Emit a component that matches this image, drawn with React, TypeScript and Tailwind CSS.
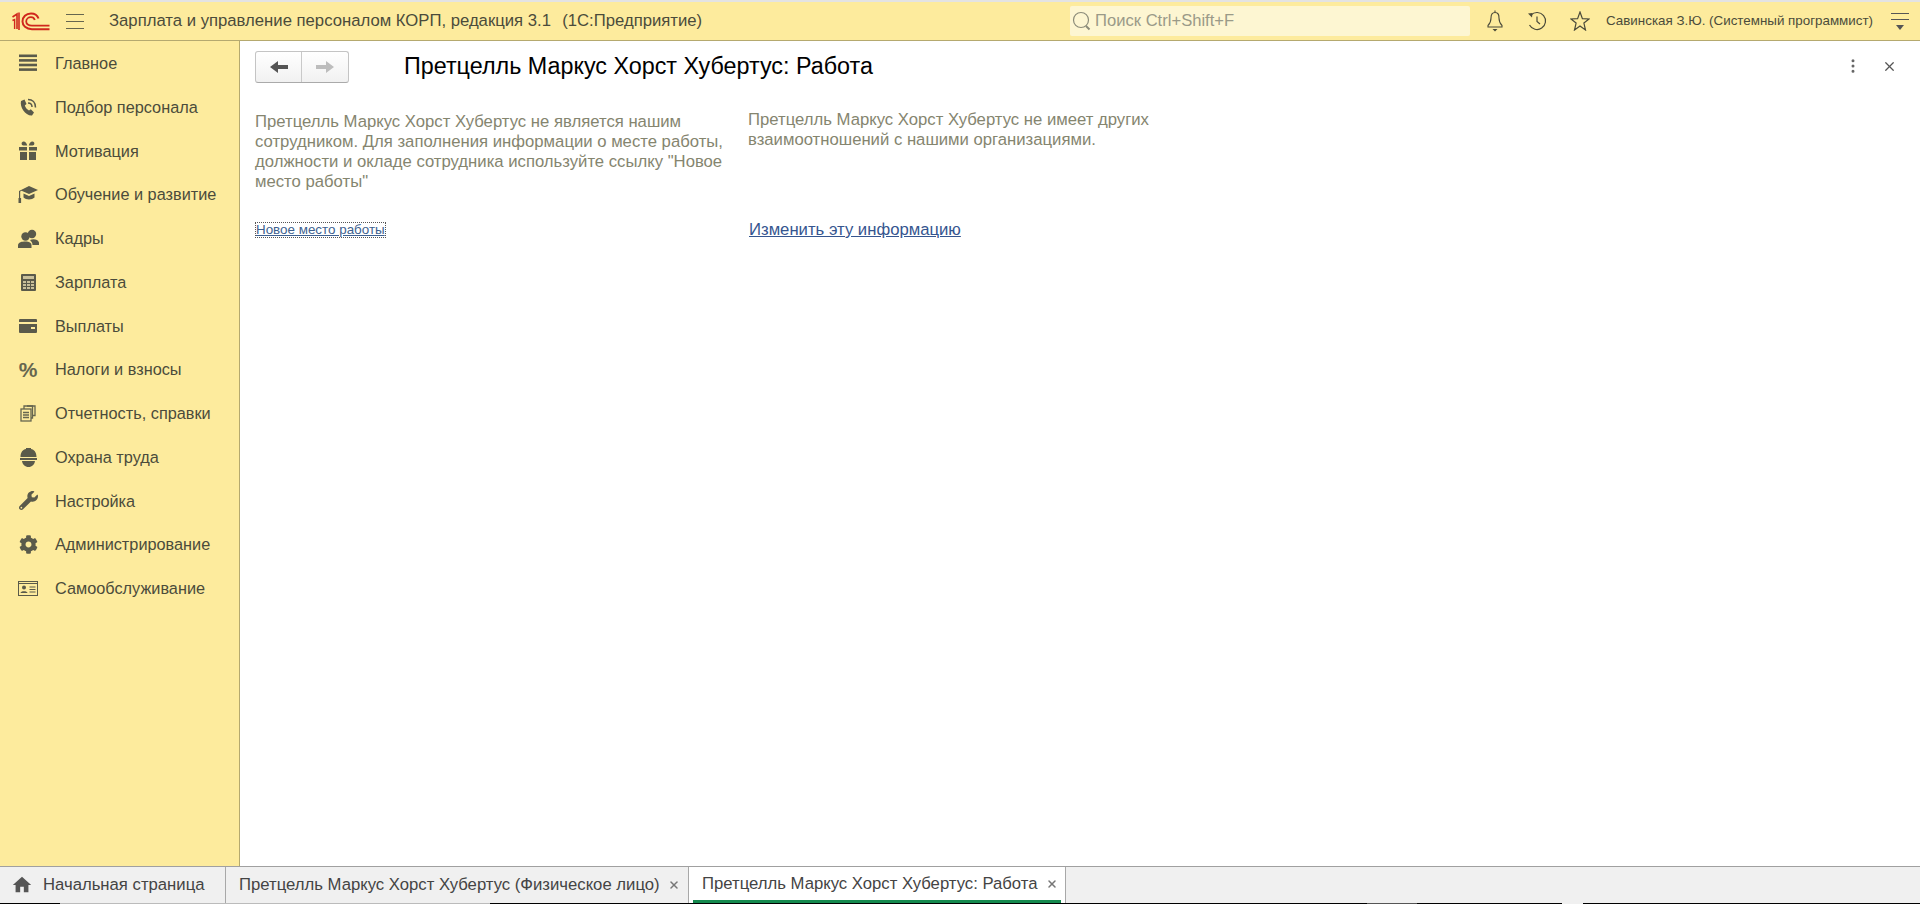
import { FaCog, FaWrench } from "react-icons/fa";
import { MdHome } from "react-icons/md";
import { MoreVertical, X } from "lucide-react";
import type { ReactNode } from "react";

const ICON = "#5a5a4a";

function LinesIcon() {
  return (
    <svg width="18" height="18" viewBox="0 0 18 18" fill={ICON}>
      <rect x="0" y="0.5" width="18" height="2.6" />
      <rect x="0" y="5.1" width="18" height="2.6" />
      <rect x="0" y="9.7" width="18" height="2.6" />
      <rect x="0" y="14.3" width="18" height="2.6" />
    </svg>
  );
}

function PhoneIcon() {
  return (
    <svg width="18" height="19" viewBox="0 0 18 19" fill="none" stroke={ICON}>
      <path d="M2 3 L5.5 1.5 L7.5 6 L5.8 7.5 C6.5 9.5 8 11.5 10 12.5 L11.8 11.2 L15 14.5 L13 17.5 C6.5 18 0.5 9 2 3 Z" fill={ICON} stroke="none" />
      <path d="M9 5 C11.5 5 13 6.5 13 9" strokeWidth="1.5" />
      <path d="M9 1.5 C13.5 1.5 16.5 4.5 16.5 9.5" strokeWidth="1.5" />
    </svg>
  );
}

function GiftIcon() {
  return (
    <svg width="18" height="19" viewBox="0 0 18 19" fill={ICON}>
      <path d="M8.2 4.5 H4.5 C2 4.5 2 0.5 4.5 0.5 C6.5 0.5 7.8 2.5 8.2 4.5 Z M9.8 4.5 H13.5 C16 4.5 16 0.5 13.5 0.5 C11.5 0.5 10.2 2.5 9.8 4.5 Z" />
      <rect x="0" y="6" width="8" height="3.5" />
      <rect x="10" y="6" width="8" height="3.5" />
      <rect x="1" y="11" width="7" height="8" />
      <rect x="10" y="11" width="7" height="8" />
    </svg>
  );
}

function CapIcon() {
  return (
    <svg width="20" height="17" viewBox="0 0 20 17" fill={ICON}>
      <path d="M11 0 L20 4 L11 8 L3.5 4.8 L2.2 5.4 V12 H1 V5 Z" />
      <path d="M5.5 7.5 L11 10 L16.5 7.5 V11.5 C14 14 8 14 5.5 11.5 Z" />
      <rect x="0.5" y="12" width="2.6" height="5" />
    </svg>
  );
}

function PeopleIcon() {
  return (
    <svg width="21" height="19" viewBox="0 0 21 19" fill={ICON}>
      <circle cx="14" cy="5" r="4.2" />
      <path d="M12 11 C15 9.5 20 10 21 13.5 V16 H14.5 C14.5 14 13.5 12.5 12 11 Z" />
      <circle cx="7.5" cy="7.5" r="4.2" />
      <path d="M0 19 V16.5 C0 13 4 12.5 7.5 12.5 C11 12.5 13.5 13.5 13.5 16.5 V19 Z" />
    </svg>
  );
}

function CalculatorIcon() {
  return (
    <svg width="15" height="17" viewBox="0 0 15 17">
      <rect width="15" height="17" rx="1" fill={ICON} />
      <rect x="2" y="2" width="11" height="3" fill="#c9c09a" />
      {[7, 10, 13].map((y) =>
        [2, 6, 10].map((x) => <rect key={`${x}-${y}`} x={x} y={y} width="3" height="2" fill="#c9c09a" />),
      )}
    </svg>
  );
}

function CardIcon() {
  return (
    <svg width="18" height="14" viewBox="0 0 18 14" fill={ICON}>
      <path d="M1 0 H17 A1 1 0 0 1 18 1 V3 H0 V1 A1 1 0 0 1 1 0 Z" />
      <path d="M0 5 H18 V13 A1 1 0 0 1 17 14 H1 A1 1 0 0 1 0 13 Z M12 8 V10 H16 V8 Z" fillRule="evenodd" />
    </svg>
  );
}

function PagesIcon() {
  return (
    <svg width="16" height="17" viewBox="0 0 16 17" fill="none" stroke="#66664f" strokeWidth="1.3">
      <rect x="1" y="4" width="10" height="12" />
      <path d="M4 4 V1 H12.5 V13 H11" />
      <path d="M7 1 H15 V10.5 H12.5" />
      <path d="M3 7.5 H9 M3 10 H9 M3 12.5 H9" />
    </svg>
  );
}

function HelmetIcon() {
  return (
    <svg width="17" height="19" viewBox="0 0 17 19" fill={ICON}>
      <path d="M0.5 9 C0.5 4 3 1.5 6 1 V0 H11 V1 C14 1.5 16.5 4 16.5 9 Z" />
      <rect x="0" y="10" width="17" height="2" />
      <path d="M2 13 H15 C14.5 16.5 12 19 8.5 19 C5 19 2.5 16.5 2 13 Z" />
    </svg>
  );
}

function IdIcon() {
  return (
    <svg width="20" height="15" viewBox="0 0 20 15" fill="none" stroke={ICON}>
      <rect x="0.5" y="0.5" width="19" height="14" strokeWidth="1" />
      <path d="M1 2.5 H19" strokeWidth="1" />
      <circle cx="6" cy="6.5" r="2" fill={ICON} stroke="none" />
      <path d="M2.5 12 C2.5 9.5 9.5 9.5 9.5 12 Z" fill={ICON} stroke="none" />
      <path d="M11.5 6 H17.5 M11.5 8.5 H17.5 M11.5 11 H17.5" strokeWidth="1.2" />
    </svg>
  );
}

function Logo() {
  return (
    <svg width="38" height="19" viewBox="0 0 38 19" fill="none" stroke="#d0271d">
      <path d="M0.5 5 L5 2 V17" strokeWidth="1.6" />
      <path d="M0.5 8.5 L2.6 7.5 V17" strokeWidth="1.4" />
      <path d="M7 0.5 V18" strokeWidth="1.6" />
      <path d="M37.5 17.2 H20 C14 17.2 10.5 13.5 10.5 9.5 C10.5 5 14 1.5 19 1.5 C23 1.5 25.5 3.5 26.5 6.5" strokeWidth="2" />
      <path d="M37.5 13.6 H20 C16.5 13.6 14.2 12 14.2 9.5 C14.2 7 16.5 5.2 19 5.2 C21 5.2 22.2 6.2 22.8 8" strokeWidth="1.8" />
    </svg>
  );
}

function Bell() {
  return (
    <svg width="20" height="24" viewBox="0 0 20 24" fill="none" stroke="#4a4a3a" strokeWidth="1.1">
      <path d="M10 1.5 V3.5 M10 3.5 C6.5 3.5 6 6 6 9 C6 13 4.5 15 3 16.5 V18 H17 V16.5 C15.5 15 14 13 14 9 C14 6 13.5 3.5 10 3.5 Z" />
      <path d="M7.5 20 H12.5 L10 22.5 Z" fill="#4a4a3a" stroke="none" />
    </svg>
  );
}

function History() {
  return (
    <svg width="20" height="20" viewBox="0 0 20 20" fill="none" stroke="#4a4a3a" strokeWidth="1.2">
      <path d="M4 4 A8.5 8.5 0 1 1 2.5 14" />
      <path d="M1 2.5 L5.5 2 L5 6.5 Z" fill="#4a4a3a" stroke="none" />
      <path d="M10 5.5 V10.5 L13 13" />
    </svg>
  );
}

function StarIcon() {
  return (
    <svg width="20" height="20" viewBox="0 0 20 20" fill="none" stroke="#4a4a3a" strokeWidth="1.2">
      <path d="M10 1 L12.4 7.6 L19 8 L13.9 12.1 L15.5 19 L10 15 L4.5 19 L6.1 12.1 L1 8 L7.6 7.6 Z" />
    </svg>
  );
}

function SearchIcon() {
  return (
    <svg width="20" height="20" viewBox="0 0 20 20" fill="none" stroke="#8c8c7a" strokeWidth="1.2">
      <circle cx="9" cy="9" r="7.5" />
      <path d="M14 15 L17.5 18.5" strokeWidth="2" />
    </svg>
  );
}

function ArrowLeft({ color }: { color: string }) {
  return (
    <svg width="18" height="14" viewBox="0 0 18 14" fill={color}>
      <path d="M0 7 L8 1 V5 H18 V9 H8 V13 Z" />
    </svg>
  );
}

function ArrowRight({ color }: { color: string }) {
  return (
    <svg width="18" height="14" viewBox="0 0 18 14" fill={color}>
      <path d="M18 7 L10 1 V5 H0 V9 H10 V13 Z" />
    </svg>
  );
}

const menu: { label: string; icon: ReactNode }[] = [
  { label: "Главное", icon: <LinesIcon /> },
  { label: "Подбор персонала", icon: <PhoneIcon /> },
  { label: "Мотивация", icon: <GiftIcon /> },
  { label: "Обучение и развитие", icon: <CapIcon /> },
  { label: "Кадры", icon: <PeopleIcon /> },
  { label: "Зарплата", icon: <CalculatorIcon /> },
  { label: "Выплаты", icon: <CardIcon /> },
  { label: "Налоги и взносы", icon: <span className="text-[21px] leading-none font-bold text-[#66664f]">%</span> },
  { label: "Отчетность, справки", icon: <PagesIcon /> },
  { label: "Охрана труда", icon: <HelmetIcon /> },
  { label: "Настройка", icon: <FaWrench size={19} color={ICON} /> },
  { label: "Администрирование", icon: <FaCog size={19} color={ICON} /> },
  { label: "Самообслуживание", icon: <IdIcon /> },
];

export default function App() {
  return (
    <div className="flex h-[904px] w-[1920px] flex-col overflow-hidden bg-white font-['Liberation_Sans',Arial,sans-serif]">
      {/* top bar */}
      <div className="h-[2px] bg-[#e3e3e3]" />
      <header className="flex h-[39px] shrink-0 items-center border-b border-[#b5a96f] bg-[#fdeb9d] text-[#4a4a3a]">
        <div className="ml-[12px] flex w-[38px] justify-center">
          <Logo />
        </div>
        <div className="ml-[16px] mt-[1px] flex w-[18px] flex-col gap-[5.6px]">
          <div className="h-px bg-[#66664f]" />
          <div className="h-px bg-[#66664f]" />
          <div className="h-px bg-[#66664f]" />
        </div>
        <span className="ml-[25px] text-[16.7px] text-[#4b4b3b]">
          Зарплата и управление персоналом КОРП, редакция 3.1 &nbsp;<span className="ml-[2px]">(1С:Предприятие)</span>
        </span>
        <div className="ml-auto flex h-[30px] w-[400px] items-center rounded-[2px] bg-[#fdf6d2] pl-[2px] text-[16.6px] text-[#9a9a88]">
          <SearchIcon />
          <span className="ml-[3px]">Поиск Ctrl+Shift+F</span>
        </div>
        <div className="ml-[15px] flex w-[20px] justify-center">
          <Bell />
        </div>
        <div className="ml-[22px] flex w-[20px] justify-center">
          <History />
        </div>
        <div className="ml-[23px] flex w-[20px] justify-center">
          <StarIcon />
        </div>
        <span className="ml-[16px] text-[13.37px] text-[#4b4b3b]">Савинская З.Ю. (Системный программист)</span>
        <div className="ml-[18px] mr-[11px] flex w-[18px] flex-col items-center gap-[5px]">
          <div className="h-px w-full bg-[#555]" />
          <div className="h-px w-full bg-[#555]" />
          <div className="h-0 w-0 border-x-[4px] border-t-[5px] border-x-transparent border-t-[#555]" />
        </div>
      </header>

      <div className="flex min-h-0 flex-1">
        {/* sidebar */}
        <aside className="w-[240px] shrink-0 border-r border-[#b5a96f] bg-[#fdeb9d] pt-[0.5px]">
          {menu.map((item) => (
            <div key={item.label} className="flex h-[43.75px] items-center">
              <div className="flex w-[55px] justify-center pl-[1px]">{item.icon}</div>
              <span className="text-[16.3px] text-[#4b4b3b]">{item.label}</span>
            </div>
          ))}
        </aside>

        {/* content */}
        <main className="min-w-0 flex-1 pl-[15px] pr-[23px] pt-[10px]">
          <div className="flex h-[32px] items-center">
            <div className="flex h-[32px] w-[94px] rounded-[3px] border border-[#c4c4c4] border-b-[#aaa] bg-gradient-to-b from-white to-[#f1f1f1]">
              <div className="flex w-[46px] items-center justify-center border-r border-[#c9c9c9]">
                <ArrowLeft color="#555" />
              </div>
              <div className="flex flex-1 items-center justify-center">
                <ArrowRight color="#bdbdbd" />
              </div>
            </div>
            <h1 className="mb-[2px] ml-[55px] text-[23.33px] font-normal text-black">Претцелль Маркус Хорст Хубертус: Работа</h1>
            <MoreVertical className="mb-[2px] ml-auto" size={18} color="#666" />
            <X className="mb-[2px] ml-[20px]" size={15} color="#555" />
          </div>

          <div className="mt-[28px] flex">
            <div className="w-[493px]">
              <p className="mt-[1px] h-[80px] w-[478px] text-[16.7px] leading-[20px] text-[#85856f]">
                Претцелль Маркус Хорст Хубертус не является нашим сотрудником. Для заполнения информации о месте работы,
                должности и окладе сотрудника используйте ссылку "Новое место работы"
              </p>
              <a className="mt-[30px] inline-block h-[16px] border border-dotted border-[#555] text-[13.4px] leading-[14px] text-[#3d5f8f] underline">
                Новое место работы
              </a>
            </div>
            <div className="-mt-px w-[420px]">
              <p className="h-[80px] text-[16.7px] leading-[20px] text-[#85856f]">
                Претцелль Маркус Хорст Хубертус не имеет других взаимоотношений с нашими организациями.
              </p>
              <a className="ml-[1px] mt-[32px] inline-block text-[16.7px] leading-[16px] text-[#35558f] underline">
                Изменить эту информацию
              </a>
            </div>
          </div>
        </main>
      </div>

      {/* tabs */}
      <footer className="flex h-[38px] shrink-0 flex-col border-t border-[#a0a0a0] bg-[#f0f0f0] text-[#444]">
        <div className="flex min-h-0 flex-1">
          <div className="flex w-[226px] items-center border-r border-[#a8a8a8] pl-[11px]">
            <MdHome size={22} color="#555" />
            <span className="ml-[10px] text-[16.7px]">Начальная страница</span>
          </div>
          <div className="flex w-[463px] items-center border-r border-[#a8a8a8] pl-[13px]">
            <span className="text-[16.7px]">Претцелль Маркус Хорст Хубертус (Физическое лицо)</span>
            <X className="ml-[8px]" size={12} strokeWidth={3} color="#777" />
          </div>
          <div className="flex w-[377px] flex-col border-r border-[#a8a8a8] bg-white px-[4px]">
            <div className="flex flex-1 items-center pl-[9px]">
              <span className="text-[16.7px]">Претцелль Маркус Хорст Хубертус: Работа</span>
              <X className="ml-[9px]" size={12} strokeWidth={3} color="#777" />
            </div>
            <div className="h-[3px] bg-[#14894e]" />
          </div>
        </div>
        <div className="flex h-px shrink-0">
          <div className="w-[60px] bg-black" />
          <div className="w-[430px] bg-[#bbb]" />
          <div className="w-[877px] bg-black" />
          <div className="w-[50px] bg-[#555]" />
          <div className="w-[145px] bg-black" />
          <div className="w-[21px]" />
          <div className="flex-1 bg-black" />
        </div>
      </footer>
    </div>
  );
}
